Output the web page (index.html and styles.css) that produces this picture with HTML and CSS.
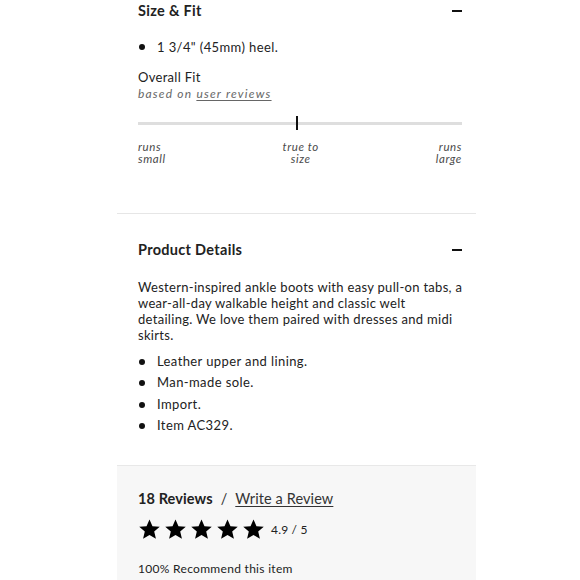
FILE: index.html
```html
<!DOCTYPE html>
<html>
<head>
<meta charset="utf-8">
<link rel="stylesheet" href="styles.css">
</head>
<body>
<div class="page">
  <section class="section fit">
    <div class="head">
      <h2 class="title">Size &amp; Fit</h2>
      <span class="minus"></span>
    </div>
    <ul class="bullets first">
      <li>1 3/4" (45mm) heel.</li>
    </ul>
    <div class="overall">Overall Fit</div>
    <div class="based">based on <a class="link" href="#">user reviews</a></div>
    <div class="slider">
      <div class="track"></div>
      <div class="thumb"></div>
    </div>
    <div class="labels">
      <span class="lab left">runs<br>small</span>
      <span class="lab mid">true to<br>size</span>
      <span class="lab right">runs<br>large</span>
    </div>
  </section>
  <section class="section details">
    <div class="head">
      <h2 class="title">Product Details</h2>
      <span class="minus"></span>
    </div>
    <p class="desc">Western-inspired ankle boots with easy pull-on tabs, a<br>wear-all-day walkable height and classic welt<br>detailing. We love them paired with dresses and midi<br>skirts.</p>
    <ul class="bullets list">
      <li>Leather upper and lining.</li>
      <li>Man-made sole.</li>
      <li>Import.</li>
      <li>Item AC329.</li>
    </ul>
  </section>
  <section class="reviews">
    <div class="rev-head"><span class="count">18 Reviews</span><span class="slash">/</span><a class="write" href="#">Write a Review</a></div>
    <div class="rating">
      <span class="stars">
        <svg class="star" viewBox="0 0 24 24"><path d="M12 1.5l3.1 7 7.6.7-5.8 5 1.8 7.5L12 17.8l-6.7 3.9 1.8-7.5-5.8-5 7.6-.7z"/></svg>
        <svg class="star" viewBox="0 0 24 24"><path d="M12 1.5l3.1 7 7.6.7-5.8 5 1.8 7.5L12 17.8l-6.7 3.9 1.8-7.5-5.8-5 7.6-.7z"/></svg>
        <svg class="star" viewBox="0 0 24 24"><path d="M12 1.5l3.1 7 7.6.7-5.8 5 1.8 7.5L12 17.8l-6.7 3.9 1.8-7.5-5.8-5 7.6-.7z"/></svg>
        <svg class="star" viewBox="0 0 24 24"><path d="M12 1.5l3.1 7 7.6.7-5.8 5 1.8 7.5L12 17.8l-6.7 3.9 1.8-7.5-5.8-5 7.6-.7z"/></svg>
        <svg class="star" viewBox="0 0 24 24"><path d="M12 1.5l3.1 7 7.6.7-5.8 5 1.8 7.5L12 17.8l-6.7 3.9 1.8-7.5-5.8-5 7.6-.7z"/></svg>
      </span>
      <span class="score">4.9 / 5</span>
    </div>
    <div class="recommend">100% Recommend this item</div>
  </section>
</div>
</body>
</html>
```
FILE: styles.css
```css
html, body {
  margin: 0;
  padding: 0;
  background: #fff;
}
body {
  font-family: Lato, "Open Sans", sans-serif;
  color: #222;
}
.page {
  width: 359px;
  margin-left: 117px;
}
.section {
  padding: 0 14px 0 21px;
}
.fit {
  padding-top: 1px;
}
.head {
  display: flex;
  justify-content: space-between;
  align-items: center;
  height: 20px;
}
.title {
  margin: 0;
  font-size: 14.5px;
  font-weight: 700;
  line-height: 20px;
  letter-spacing: 0.3px;
}
.minus {
  width: 10px;
  height: 2px;
  background: #111;
}
.bullets {
  list-style: none;
  margin: 0;
  padding: 0;
}
.bullets li {
  position: relative;
  padding-left: 19px;
  font-size: 13px;
  letter-spacing: 0.4px;
}
.bullets li::before {
  content: "";
  position: absolute;
  left: 1px;
  top: 50%;
  width: 6px;
  height: 6px;
  margin-top: -3px;
  border-radius: 50%;
  background: #111;
}
.bullets.first {
  margin-top: 16px;
}
.bullets.first li {
  line-height: 20px;
}
.overall {
  margin-top: 11px;
  font-size: 13px;
  line-height: 18px;
  letter-spacing: 0.3px;
}
.based {
  font-size: 12px;
  line-height: 16px;
  font-style: italic;
  color: #666;
  letter-spacing: 1.2px;
}
.link {
  color: #666;
  text-decoration: underline;
  text-underline-offset: 2px;
}
.slider {
  position: relative;
  height: 14px;
  margin-top: 14px;
}
.track {
  position: absolute;
  left: 0;
  right: 0;
  top: 6px;
  height: 3px;
  background: #dedede;
}
.thumb {
  position: absolute;
  left: 158px;
  top: 0;
  width: 2px;
  height: 14px;
  background: #111;
}
.labels {
  display: flex;
  justify-content: space-between;
  margin-top: 11px;
  padding-bottom: 48px;
}
.lab {
  font-size: 11.5px;
  line-height: 12px;
  font-style: italic;
  color: #4a4a4a;
  letter-spacing: 0.6px;
}
.lab.mid {
  text-align: center;
}
.lab.right {
  text-align: right;
}
.details {
  border-top: 1px solid #e6e6e6;
  padding-top: 26px;
  padding-bottom: 28px;
}
.desc {
  margin: 19px 0 0;
  font-size: 13px;
  line-height: 16px;
  letter-spacing: 0.3px;
  white-space: nowrap;
}
.bullets.list {
  margin-top: 8px;
}
.bullets.list li {
  line-height: 21.4px;
}
.reviews {
  background: #f7f7f7;
  border-top: 1px solid #e8e8e8;
  padding: 23px 21px 10px 21px;
}
.rev-head {
  display: flex;
  align-items: center;
  height: 20px;
  font-size: 14.5px;
  letter-spacing: 0.1px;
}
.count {
  font-weight: 700;
}
.slash {
  margin: 0 8px 0 8px;
  color: #333;
}
.write {
  color: #333;
  text-decoration: underline;
  text-underline-offset: 2px;
}
.rating {
  display: flex;
  align-items: center;
  margin-top: 10px;
  height: 22px;
}
.stars {
  display: flex;
  gap: 3px;
}
.star {
  width: 23px;
  height: 23px;
  fill: #000;
}
.score {
  margin-left: 6px;
  font-size: 12px;
  letter-spacing: 0.2px;
}
.recommend {
  margin-top: 19px;
  font-size: 12px;
  line-height: 18px;
  letter-spacing: 0.3px;
}
```
